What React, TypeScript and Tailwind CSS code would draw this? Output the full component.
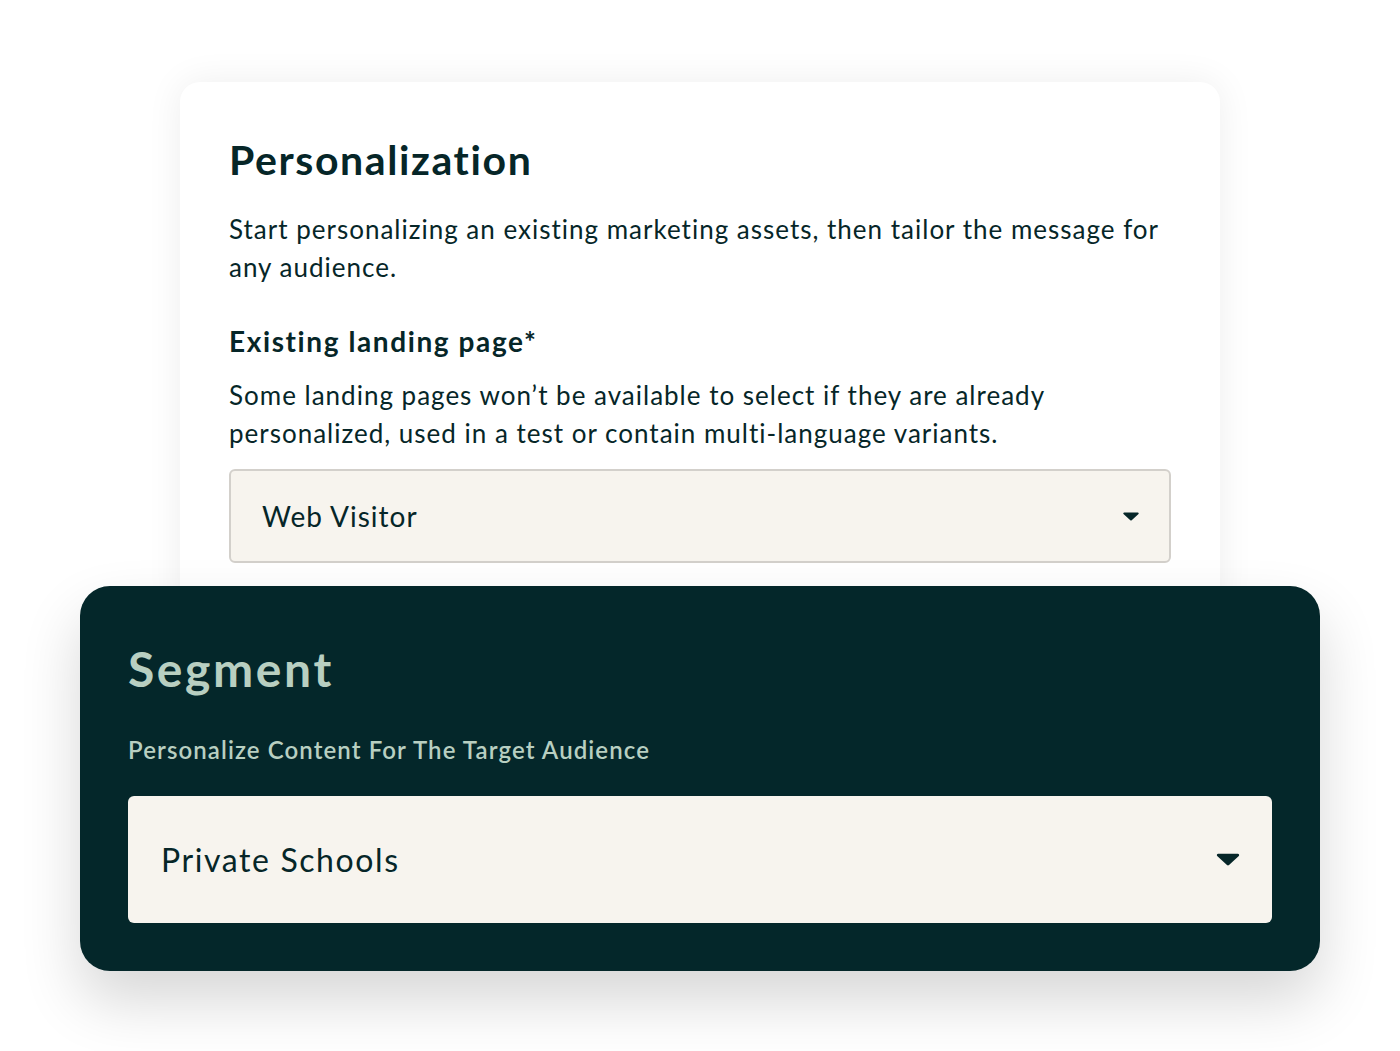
import React from 'react';

// Caret for the fake select boxes
const Caret: React.FC<{ w: number; h: number }> = ({ w, h }) => (
  <svg width={w} height={h} viewBox="0 0 16 9" fill="#062628">
    <path d="M1.2 0.5h13.6c0.8 0 1.2 0.9 0.7 1.5L8.7 8.3c-0.4 0.4-1 0.4-1.4 0L0.5 2C0 1.4 0.4 0.5 1.2 0.5z" />
  </svg>
);

export default function App() {
  return (
    <div className="min-h-[1051px] w-full bg-white flex flex-col items-center pt-[82px] font-['Lato',sans-serif]">
      {/* Personalization card */}
      <div className="w-[1040px] bg-white rounded-[20px] shadow-[0_0_36px_rgba(0,0,0,0.07)] pt-[54px] px-[49px] pb-[57px] text-[#062628]">
        <h1 className="text-[41px] leading-[48px] font-bold tracking-[1.6px]">Personalization</h1>
        <p className="mt-[26px] text-[26px] leading-[38px] tracking-[1px]">
          Start personalizing an existing marketing assets, then tailor the message for any audience.
        </p>
        <h2 className="mt-[37px] text-[28px] leading-[36px] font-bold tracking-[1.6px]">Existing landing page*</h2>
        <p className="mt-[17px] text-[26px] leading-[38px] tracking-[1px] max-w-[880px]">
          Some landing pages won’t be available to select if they are already personalized, used in a test or contain multi-language variants.
        </p>
        <div className="mt-[17px] h-[94px] w-[942px] rounded-[6px] border-2 border-[#d3d0cb] bg-[#f7f4ee] flex items-center justify-between pl-[31px] pr-[30px]">
          <span className="text-[28px] tracking-[1px]">Web Visitor</span>
          <Caret w={16} h={9} />
        </div>
      </div>

      {/* Segment card */}
      <div className="relative z-10 -mt-[34px] w-[1240px] bg-[#04272a] rounded-[30px] shadow-[0_30px_60px_rgba(0,0,0,0.16)] pt-[55px] px-[48px] pb-[48px]">
        <h2 className="text-[48px] leading-[56px] font-bold text-[#b8cfc1] tracking-[2.6px]">Segment</h2>
        <p className="mt-[37px] text-[24px] leading-[32px] font-semibold text-[#b8cfc1] tracking-[1.1px]">
          Personalize Content For The Target Audience
        </p>
        <div className="mt-[30px] h-[127px] w-full rounded-[6px] bg-[#f7f4ee] flex items-center justify-between pl-[33px] pr-[32px] text-[#062628]">
          <span className="text-[32px] tracking-[1.6px]">Private Schools</span>
          <Caret w={24} h={13} />
        </div>
      </div>
    </div>
  );
}
